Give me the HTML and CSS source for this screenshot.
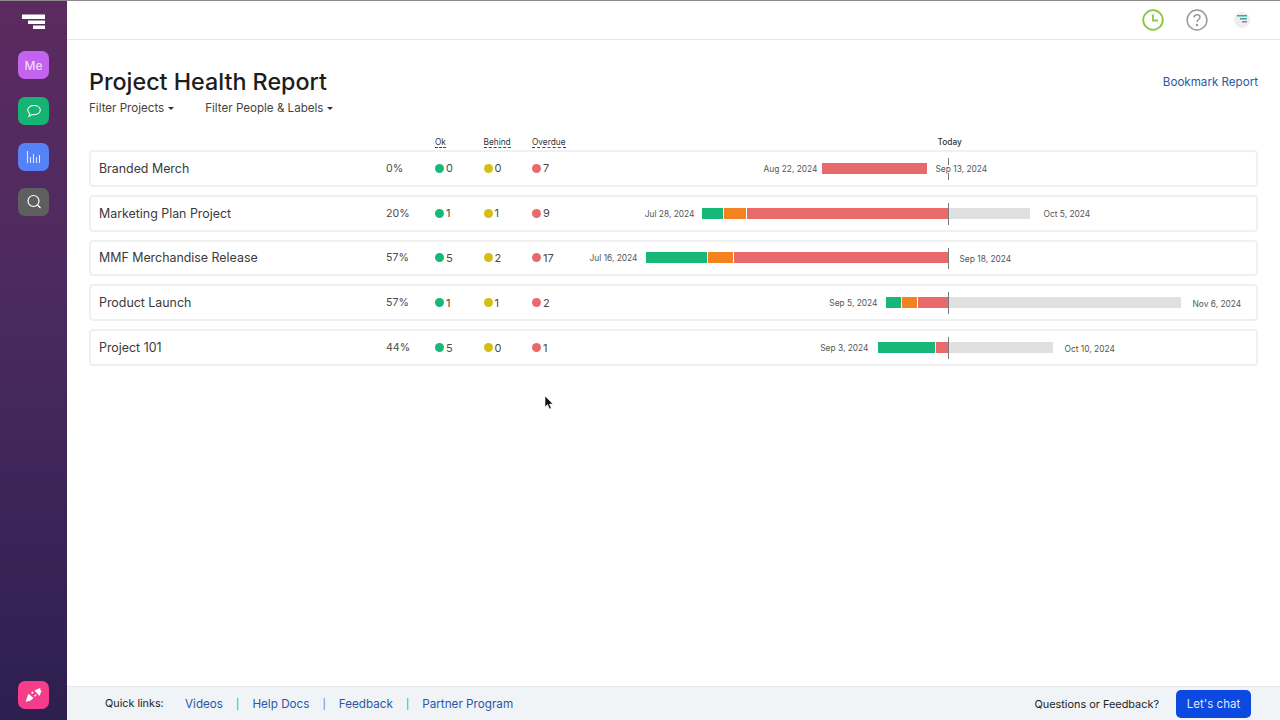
FILE: index.html
```html
<!DOCTYPE html>
<html lang="en">
<head>
  <meta charset="UTF-8">
  <title>Project Health Report</title>
  <link rel="stylesheet" href="styles.css">
</head>
<body>
  <aside class="sidebar">
    <svg class="logo" width="24" height="16" viewBox="0 0 24 16">
      <path d="M0 0.500h23v4.500H0zM6 6.500h17v3.500H6zM11 11.500h12V15H11z" fill="#fff"/>
    </svg>
    <div class="tile tile-me">Me</div>
    <div class="tile tile-chat">
      <svg width="16" height="16" viewBox="0 0 16 16" fill="none" stroke="#fff" stroke-width="1.100">
        <path d="M8 2.500c3.600 0 6.300 2 6.300 4.600S11.600 11.700 8 11.700c-.7 0-1.300-.1-1.900-.2L3 13.400l.8-2.800C2.500 9.700 1.700 8.500 1.700 7.100 1.700 4.500 4.400 2.500 8 2.500z"/>
      </svg>
    </div>
    <div class="tile tile-bars">
      <svg width="16" height="14" viewBox="0 0 16 14" fill="none" stroke="#dfe8ff" stroke-width="1.100">
        <path d="M1.500 1v12M4.500 7v6M7.500 4v9M10.500 7v6M13.500 5v8"/>
      </svg>
    </div>
    <div class="tile tile-search">
      <svg width="16" height="16" viewBox="0 0 16 16" fill="none" stroke="#fff" stroke-width="1.200">
        <circle cx="7.500" cy="7" r="5.500"/>
        <path d="M11.500 11l3 3"/>
      </svg>
    </div>
    <div class="tile tile-plug">
      <svg width="18" height="16" viewBox="0 0 18 16" fill="#fff">
        <path d="M9.500 3.500L15.500 0.800 15 3 16.600 3.400 14.500 9z"/>
        <path d="M3.500 6.800L2.400 9.500 1 13.800 0.700 15 2 14.500 5.200 13.800 8.400 10.900z"/>
        <path d="M6 5.800l1.700-1.400 1 1-1.500 1.500zM9 8.700l1.500-1.400 1 1-1.600 1.500z"/>
      </svg>
    </div>
  </aside>

  <div class="main">
    <header class="topbar">
      <svg class="clock" width="22" height="22" viewBox="0 0 22 22" fill="none" stroke="#8cc63f" stroke-width="1.800">
        <circle cx="11" cy="11" r="9.800"/>
        <path d="M11 5.500V11.500h5"/>
      </svg>
      <svg class="help" width="22" height="22" viewBox="0 0 22 22" fill="none" stroke="#9a9a9a" stroke-width="1.500">
        <circle cx="11" cy="11" r="9.900"/>
        <path d="M8 8.500c0-1.700 1.300-2.800 3-2.800s3 1.100 3 2.600c0 2.200-3 2.300-3 4.700"/>
        <circle cx="11" cy="16" r=".6" fill="#9a9a9a"/>
      </svg>
      <div class="avatar">
        <svg width="10" height="9" viewBox="0 0 10 9">
          <path d="M0 0h10v1.500H0z" fill="#2bb58a"/>
          <path d="M3 3h7v1.500H3z" fill="#3f9fa8"/>
          <path d="M5 6h5v1.500H5z" fill="#9a6fc0"/>
        </svg>
      </div>
    </header>

    <main class="content">
      <div class="page-head">
        <div>
          <h1>Project Health Report</h1>
          <div class="filters">
            <span class="filter">Filter Projects</span>
            <span class="filter">Filter People &amp; Labels</span>
          </div>
        </div>
        <a class="bookmark">Bookmark Report</a>
      </div>

      <div class="head-row">
        <div class="col-name"></div>
        <div class="col-pct"></div>
        <div class="col-count"><span class="dashed">Ok</span></div>
        <div class="col-count"><span class="dashed">Behind</span></div>
        <div class="col-count"><span class="dashed">Overdue</span></div>
        <div class="col-time"><span class="today-label">Today</span></div>
      </div>

      <div class="rows">
        <div class="row">
          <div class="col-name">Branded Merch</div>
          <div class="col-pct">0%</div>
          <div class="col-count"><i class="dot green"></i>0</div>
          <div class="col-count"><i class="dot yellow"></i>0</div>
          <div class="col-count"><i class="dot red"></i>7</div>
          <div class="col-time">
            <div class="gantt" style="margin-left:177px">
              <span class="date-start" style="margin-right:4px;margin-left:4px">Aug 22, 2024</span>
              <div class="bar">
                <i class="seg red" style="width:105px"></i>
              </div>
              <span class="date-end" style="margin-left:9px">Sep 13, 2024</span>
            </div>
            <i class="today-line"></i>
          </div>
        </div>

        <div class="row">
          <div class="col-name">Marketing Plan Project</div>
          <div class="col-pct">20%</div>
          <div class="col-count"><i class="dot green"></i>1</div>
          <div class="col-count"><i class="dot yellow"></i>1</div>
          <div class="col-count"><i class="dot red"></i>9</div>
          <div class="col-time">
            <div class="gantt" style="margin-left:57px">
              <span class="date-start" style="margin-right:7px;margin-left:1px">Jul 28, 2024</span>
              <div class="bar">
                <i class="seg green" style="width:21px"></i>
                <i class="seg orange" style="width:22px"></i>
                <i class="seg red" style="width:202px"></i>
                <i class="seg grey" style="width:81px"></i>
              </div>
              <span class="date-end" style="margin-left:14px">Oct 5, 2024</span>
            </div>
            <i class="today-line"></i>
          </div>
        </div>

        <div class="row">
          <div class="col-name">MMF Merchandise Release</div>
          <div class="col-pct">57%</div>
          <div class="col-count"><i class="dot green"></i>5</div>
          <div class="col-count"><i class="dot yellow"></i>2</div>
          <div class="col-count"><i class="dot red"></i>17</div>
          <div class="col-time">
            <div class="gantt" style="margin-left:1px">
              <span class="date-start">Jul 16, 2024</span>
              <div class="bar">
                <i class="seg green" style="width:61px"></i>
                <i class="seg orange" style="width:25px"></i>
                <i class="seg red" style="width:215px"></i>
              </div>
              <span class="date-end" style="margin-left:11px">Sep 18, 2024</span>
            </div>
            <i class="today-line"></i>
          </div>
        </div>

        <div class="row">
          <div class="col-name">Product Launch</div>
          <div class="col-pct">57%</div>
          <div class="col-count"><i class="dot green"></i>1</div>
          <div class="col-count"><i class="dot yellow"></i>1</div>
          <div class="col-count"><i class="dot red"></i>2</div>
          <div class="col-time">
            <div class="gantt" style="margin-left:241px">
              <span class="date-start">Sep 5, 2024</span>
              <div class="bar">
                <i class="seg green" style="width:15px"></i>
                <i class="seg orange" style="width:15px"></i>
                <i class="seg red" style="width:31px"></i>
                <i class="seg grey" style="width:232px"></i>
              </div>
              <span class="date-end" style="margin-left:12px">Nov 6, 2024</span>
            </div>
            <i class="today-line"></i>
          </div>
        </div>

        <div class="row">
          <div class="col-name">Project 101</div>
          <div class="col-pct">44%</div>
          <div class="col-count"><i class="dot green"></i>5</div>
          <div class="col-count"><i class="dot yellow"></i>0</div>
          <div class="col-count"><i class="dot red"></i>1</div>
          <div class="col-time">
            <div class="gantt" style="margin-left:233px">
              <span class="date-start" style="margin-right:9px;margin-left:-1px">Sep 3, 2024</span>
              <div class="bar">
                <i class="seg green" style="width:57px"></i>
                <i class="seg red" style="width:12px"></i>
                <i class="seg grey" style="width:105px"></i>
              </div>
              <span class="date-end" style="margin-left:12px">Oct 10, 2024</span>
            </div>
            <i class="today-line"></i>
          </div>
        </div>
      </div>
    </main>

    <footer class="footer">
      <div class="quick-links">
        <span class="quick-title">Quick links:</span>
        <a>Videos</a>
        <span class="sep">|</span>
        <a>Help Docs</a>
        <span class="sep">|</span>
        <a>Feedback</a>
        <span class="sep">|</span>
        <a>Partner Program</a>
      </div>
      <div class="chat">
        <span>Questions or Feedback?</span>
        <button class="chat-btn">Let's chat</button>
      </div>
    </footer>
  </div>

  <!-- mouse pointer caught in the screenshot -->
  <svg class="cursor" width="10" height="15" viewBox="0 0 10 15">
    <path d="M1 1v11l2.600-2.400L5.500 14l1.800-.8L5.500 9H9z" fill="#111" stroke="#fff" stroke-width=".6"/>
  </svg>
</body>
</html>
```

FILE: styles.css
```css
* {
  box-sizing: border-box;
}
html, body {
  height: 100%;
}
body {
  margin: 0;
  display: flex;
  height: 720px;
  overflow: hidden;
  font-family: "Inter", "Liberation Sans", sans-serif;
  color: #333;
  background: #fff;
  border-top: 1px solid #8c8c8c;
}

/* Sidebar */
.sidebar {
  width: 67px;
  flex-shrink: 0;
  display: flex;
  flex-direction: column;
  align-items: center;
  padding: 13px 0 11px;
  background: linear-gradient(#5c2a5f, #4c2a60 40%, #2d1f50);
}
.logo {
  margin-left: 1px;
  margin-bottom: 21px;
}
.tile {
  width: 31px;
  height: 28px;
  margin-bottom: 18px;
  border-radius: 7px;
  display: flex;
  align-items: center;
  justify-content: center;
  color: #f0dcfc;
  font-size: 12px;
  font-weight: 500;
}
.tile-me {
  background: #c264ee;
}
.tile-chat {
  background: #15b374;
}
.tile-bars {
  background: #5582f6;
  margin-bottom: 17px;
}
.tile-search {
  background: #5f5f5f;
}
.tile-plug {
  background: #f53d8b;
  margin-top: auto;
  margin-bottom: 0;
}

/* Top bar */
.main {
  flex: 1;
  display: flex;
  flex-direction: column;
  min-width: 0;
}
.topbar {
  height: 39px;
  flex-shrink: 0;
  display: flex;
  align-items: center;
  justify-content: flex-end;
  padding-right: 30px;
  padding-bottom: 1px;
  border-bottom: 1px solid #e6e6e6;
}
.help {
  margin-left: 22px;
}
.avatar {
  width: 16px;
  height: 16px;
  margin-left: 26px;
  border-radius: 50%;
  background: #eeeeee;
  display: flex;
  align-items: center;
  justify-content: center;
}

/* Page */
.content {
  flex: 1;
  padding: 0 22px;
}
.page-head {
  display: flex;
  justify-content: space-between;
  align-items: flex-start;
  padding-top: 28px;
}
h1 {
  margin: 0;
  font-size: 23.300px;
  line-height: 28px;
  font-weight: 500;
  color: #1d1d1d;
}
.filters {
  display: flex;
  gap: 31px;
  margin-top: 4px;
  font-size: 11.600px;
  line-height: 16px;
  color: #444;
}
.filter::after {
  content: "";
  display: inline-block;
  margin-left: 4px;
  vertical-align: middle;
  border: 3.500px solid transparent;
  border-top-color: #333;
  border-bottom: 0;
}
.bookmark {
  margin-top: 6px;
  font-size: 11.600px;
  line-height: 16px;
  color: #2a57a8;
}

/* Table */
.head-row, .row {
  display: flex;
  align-items: center;
}
.head-row {
  height: 16px;
  margin-top: 18px;
  font-size: 8.300px;
  color: #333;
}
.dashed {
  border-bottom: 1px dashed #444;
  line-height: 10px;
  display: inline-block;
}
.rows {
  display: flex;
  flex-direction: column;
  gap: 8px;
}
.row {
  height: 36.800px;
  border: 2px solid #f0f0f0;
  border-radius: 4px;
  font-size: 11px;
  color: #4a4a4a;
}
.col-name {
  width: 295px;
  padding-left: 8px;
  flex-shrink: 0;
  font-size: 12.400px;
  color: #3a3a3a;
}
.head-row .col-name {
  width: 297px;
}
.col-pct {
  width: 49px;
  flex-shrink: 0;
  font-size: 10.600px;
}
.col-count {
  width: 48.500px;
  flex-shrink: 0;
  display: flex;
  align-items: center;
}
.col-time {
  flex: 1;
  align-self: stretch;
  display: flex;
  align-items: center;
  position: relative;
  min-width: 0;
}
.today-label {
  margin-left: 357px;
  font-weight: 500;
}
.dot {
  width: 9px;
  height: 9px;
  border-radius: 50%;
  margin-right: 2px;
}
.dot.green {
  background: #18b77a;
}
.dot.yellow {
  background: #d3bf14;
}
.dot.red {
  background: #e96a6b;
}

/* Gantt */
.gantt {
  display: flex;
  align-items: center;
  font-size: 8.400px;
  color: #555;
  white-space: nowrap;
}
.date-start {
  width: 56px;
  margin-right: 8px;
  padding-top: 1px;
  text-align: right;
}
.date-end {
  position: relative;
  top: 1px;
  z-index: 1;
  line-height: 8px;
  background: #fff;
}
.bar {
  display: flex;
  gap: 1px;
  height: 11px;
}
.seg {
  display: block;
  height: 100%;
}
.seg.green {
  background: #16b777;
}
.seg.orange {
  background: #f38220;
}
.seg.red {
  background: #e96a6b;
}
.seg.grey {
  background: #dfe1e0;
  margin-left: -1px;
}
.today-line {
  position: absolute;
  left: 367px;
  top: 6px;
  bottom: 5px;
  width: 1px;
  background: #777;
}

/* Footer */
.footer {
  height: 34px;
  flex-shrink: 0;
  display: flex;
  align-items: center;
  justify-content: space-between;
  padding: 0 29px 0 38px;
  background: #f0f4f7;
  border-top: 1px solid #e5e9ec;
  font-size: 11.700px;
  color: #222;
}
.quick-links {
  display: flex;
  align-items: center;
}
.quick-title {
  width: 80px;
  font-size: 10.800px;
}
.quick-links a {
  color: #2a57a8;
}
.sep {
  margin: 0 13px;
  font-size: 10px;
  color: #5a7cbc;
}
.chat {
  display: flex;
  align-items: center;
  gap: 17px;
  font-size: 10.900px;
}
.chat-btn {
  width: 75px;
  height: 28px;
  border: none;
  border-radius: 5px;
  background: #0b49e0;
  color: #dfe8ff;
  font-family: inherit;
  font-size: 11.500px;
}

.cursor {
  position: absolute;
  left: 544px;
  top: 395px;
}
```
